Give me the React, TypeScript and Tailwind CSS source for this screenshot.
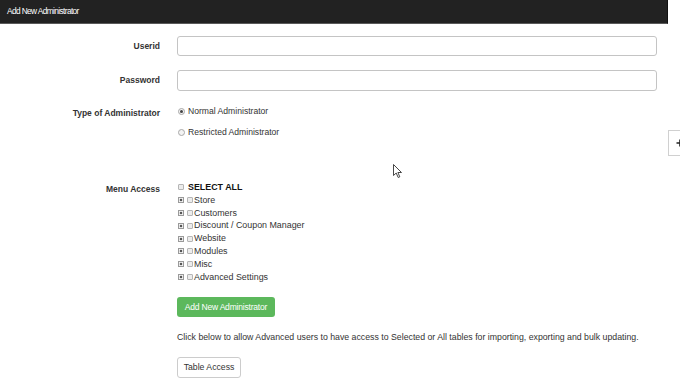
import React from 'react';

const font = { fontFamily: '"Liberation Sans", Arial, sans-serif' };

const Box: React.FC = () => (
  <span className="inline-block w-[6px] h-[6px] border border-[#b5b5b5] bg-[#ececec] rounded-[1px] shrink-0"></span>
);

const Expander: React.FC = () => (
  <svg className="w-[6px] h-[6px] shrink-0" viewBox="0 0 6 6">
    <rect x="0.5" y="0.5" width="5" height="5" fill="#f4f4f4" stroke="#9a9a9a" strokeWidth="1" />
    <path d="M1.8 3h2.4M3 1.8v2.4" stroke="#222" strokeWidth="1" />
  </svg>
);

const Radio: React.FC<{ checked?: boolean }> = ({ checked }) => (
  <span className="inline-flex items-center justify-center w-[7px] h-[7px] rounded-full border border-[#a8a8a8] bg-[#f3f3f3] shrink-0">
    {checked && <span className="w-[3px] h-[3px] rounded-full bg-[#444]"></span>}
  </span>
);

const menuItems = ['Store', 'Customers', 'Discount / Coupon Manager', 'Website', 'Modules', 'Misc', 'Advanced Settings'];

export default function App() {
  return (
    <div className="relative w-[680px] h-[386px] bg-white overflow-hidden text-[#333]" style={font}>
      <div className="w-[668px] h-[24px] bg-[#222] border-b border-[#5a5a5a] border-r border-r-[#111] flex items-center pl-[7px]">
        <span className="text-white text-[8.3px] tracking-[-0.6px]">Add New Administrator</span>
      </div>

      <div className="w-[668px] pr-[11px] pt-[12px] flex flex-col">
        <div className="flex items-center h-[20px]">
          <div className="w-[160px] text-right font-bold text-[8.5px]">Userid</div>
          <div className="flex-1 ml-[17px] h-[20px] border border-[#c4c4c4] rounded-[3px]"></div>
        </div>

        <div className="flex items-center h-[21px] mt-[14px]">
          <div className="w-[160px] text-right font-bold text-[8.5px]">Password</div>
          <div className="flex-1 ml-[17px] h-[21px] border border-[#c4c4c4] rounded-[3px]"></div>
        </div>

        <div className="flex mt-[13px]">
          <div className="w-[160px] text-right font-bold text-[8.5px] leading-[14px] pt-[2px]">Type of Administrator</div>
          <div className="ml-[18px] flex flex-col gap-[7px] text-[8.6px] leading-[14px]">
            <div className="flex items-center gap-[3px]"><Radio checked />Normal Administrator</div>
            <div className="flex items-center gap-[3px]"><Radio />Restricted Administrator</div>
          </div>
        </div>

        <div className="flex mt-[42px]">
          <div className="w-[160px] text-right font-bold text-[8.5px] leading-[12.8px] pt-[2px]">Menu Access</div>
          <div className="ml-[18px] flex flex-col text-[8.9px] leading-[12.8px]">
            <div className="flex items-center gap-[4px] font-bold text-[#111]"><Box />SELECT ALL</div>
            {menuItems.map((item) => (
              <div key={item} className="flex items-center">
                <Expander />
                <span className="ml-[3px] mr-[1px] flex"><Box /></span>
                {item}
              </div>
            ))}
          </div>
        </div>

        <div className="ml-[177px] mt-[14px] flex flex-col items-start">
          <button className="h-[20px] w-[98px] bg-[#5cb85c] rounded-[3px] text-white text-[8.5px] tracking-[-0.2px]">
            Add New Administrator
          </button>
          <p className="mt-[14px] text-[8.75px] leading-[12px]">
            Click below to allow Advanced users to have access to Selected or All tables for importing, exporting and bulk updating.
          </p>
          <button className="mt-[14px] h-[21px] w-[64px] bg-white border border-[#ccc] rounded-[3px] text-[8.7px]">
            Table Access
          </button>
        </div>
      </div>

      <div className="absolute right-0 top-[130px] w-[12px] h-[26px] border border-r-0 border-[#d0d0d0] bg-white">
        <svg className="absolute left-[7px] top-[8px] w-[8px] h-[8px]" viewBox="0 0 8 8">
          <path d="M4 0.5v7M0.5 4h7" stroke="#222" strokeWidth="1.6" />
        </svg>
      </div>

      <svg className="absolute left-[393px] top-[164px] w-[10px] h-[15px]" viewBox="0 0 10 15">
        <path d="M0.5 0.5 L0.5 11.5 L3.2 9 L5.2 13.5 L6.8 12.8 L4.9 8.5 L8.5 8.5 Z" fill="#fff" stroke="#333" strokeWidth="0.9" strokeLinejoin="round" />
      </svg>
    </div>
  );
}
